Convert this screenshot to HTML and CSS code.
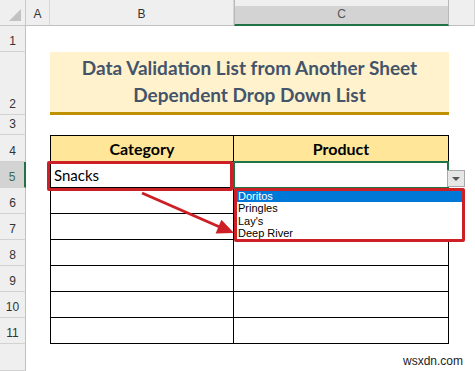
FILE: index.html
```html
<!DOCTYPE html>
<html lang="en">
<head>
  <meta charset="UTF-8">
  <meta name="viewport" content="width=device-width, initial-scale=1.0">
  <link rel="stylesheet" href="styles.css">
  <title>Dependent Drop Down List</title>
</head>
<body>
  <div class="sheet">
    <!-- column headers -->
    <div class="corner"><span class="corner-tri"></span></div>
    <div class="col-head">A</div>
    <div class="col-head">B</div>
    <div class="col-head selected">C</div>
    <div class="col-head"></div>

    <!-- row 1 -->
    <div class="row-head">1</div>
    <div></div><div></div><div></div><div></div>

    <!-- row 2: title -->
    <div class="row-head">2</div>
    <div></div>
    <div class="title">Data Validation List from Another Sheet<br>Dependent Drop Down List</div>
    <div></div>

    <!-- row 3 -->
    <div class="row-head">3</div>
    <div></div><div></div><div></div><div></div>

    <!-- row 4: table header -->
    <div class="row-head">4</div>
    <div></div>
    <div class="tc th first">Category</div>
    <div class="tc th">Product</div>
    <div></div>

    <!-- row 5 -->
    <div class="row-head selected">5</div>
    <div></div>
    <div class="tc first">Snacks</div>
    <div class="tc"></div>
    <div></div>

    <div class="row-head">6</div>
    <div></div><div class="tc first"></div><div class="tc"></div><div></div>

    <div class="row-head">7</div>
    <div></div><div class="tc first"></div><div class="tc"></div><div></div>

    <div class="row-head">8</div>
    <div></div><div class="tc first"></div><div class="tc"></div><div></div>

    <div class="row-head">9</div>
    <div></div><div class="tc first"></div><div class="tc"></div><div></div>

    <div class="row-head">10</div>
    <div></div><div class="tc first"></div><div class="tc"></div><div></div>

    <div class="row-head">11</div>
    <div></div><div class="tc first"></div><div class="tc"></div><div></div>

    <div class="row-head"></div>
    <div></div><div></div><div></div><div></div>

    <!-- overlays -->
    <div class="active-cell"></div>
    <div class="dd-btn"><span class="dd-tri"></span></div>
    <ul class="dd-list">
      <li class="picked">Doritos</li>
      <li>Pringles</li>
      <li>Lay's</li>
      <li>Deep River</li>
    </ul>
    <div class="mark mark-snacks"></div>
    <div class="mark mark-list"></div>
    <svg class="arrow" width="475" height="371" viewBox="0 0 475 371">
      <line x1="142" y1="193" x2="222" y2="228" stroke="#cc1f26" stroke-width="3"/>
      <polygon points="234,233 215.6,233.5 221.4,219.8" fill="#cc1f26"/>
    </svg>
    <div class="watermark">wsxdn.com</div>
  </div>
</body>
</html>
```

FILE: styles.css
```css
* {
  box-sizing: border-box;
}

body {
  margin: 0;
  background: #fff;
  font-family: 'Liberation Sans', Arial, sans-serif;
}

.sheet {
  position: relative;
  width: 475px;
  height: 371px;
  overflow: hidden;
  display: grid;
  grid-template-columns: 26px 24px 184px 215px 1fr;
  grid-template-rows: 26px 26px 63px 20px 27px repeat(7, 26px) 1fr;
}

.corner {
  background: #efefef;
  border-right: 1px solid #c8c8c8;
  border-bottom: 1px solid #c8c8c8;
  position: relative;
}

.corner-tri {
  position: absolute;
  right: 4px;
  bottom: 4px;
  width: 0;
  height: 0;
  border-left: 12px solid transparent;
  border-bottom: 12px solid #c2c2c2;
}

.col-head {
  background: #efefef;
  border-right: 1px solid #d6d6d6;
  border-bottom: 1px solid #c0c0c0;
  font-size: 12px;
  color: #333;
  display: flex;
  align-items: center;
  justify-content: center;
  padding-top: 3px;
}

.col-head.selected {
  background: linear-gradient(#efefef 6px, #d3d3d3 6px);
  border-left: 1px solid #b8b8b8;
  border-right: 1px solid #b8b8b8;
  border-bottom: 2px solid #217346;
  color: #555;
}

.row-head {
  background: #efefef;
  border-right: 1px solid #c0c0c0;
  border-bottom: 1px solid #d2d2d2;
  font-size: 12px;
  color: #333;
  display: flex;
  align-items: flex-end;
  justify-content: center;
  padding-bottom: 3px;
}

.row-head.selected {
  background: #d3d3d3;
  border-right: 2px solid #217346;
  color: #3b6b50;
}

.title {
  grid-column: 3 / 5;
  background: #fff2cc;
  border-bottom: 3px solid #bf9000;
  color: #44546a;
  font-family: Lato, 'Open Sans', sans-serif;
  font-weight: bold;
  font-size: 19px;
  line-height: 27px;
  text-align: center;
  padding-top: 2px;
}

.tc {
  border-right: 1px solid #000;
  border-bottom: 1px solid #000;
  font-family: Lato, 'Open Sans', sans-serif;
  font-size: 15px;
  color: #000;
  display: flex;
  align-items: flex-end;
  padding: 0 0 3px 3px;
}

.tc.first {
  border-left: 1px solid #000;
}

.tc.th {
  border-top: 1px solid #000;
  background: #ffe699;
  font-weight: bold;
  font-size: 16px;
  justify-content: center;
  padding-left: 0;
}

.active-cell {
  position: absolute;
  left: 233px;
  top: 161px;
  width: 216px;
  height: 28px;
  border: 2px solid #217346;
}

.dd-btn {
  position: absolute;
  left: 447px;
  top: 170px;
  width: 18px;
  height: 17px;
  background: #e6e6e6;
  border: 1px solid #a8a8a8;
  display: flex;
  align-items: center;
  justify-content: center;
}

.dd-tri {
  width: 0;
  height: 0;
  border-left: 4px solid transparent;
  border-right: 4px solid transparent;
  border-top: 4px solid #555;
}

.dd-list {
  position: absolute;
  left: 236px;
  top: 190px;
  width: 227px;
  height: 51px;
  margin: 0;
  padding: 1px 0 0 0;
  list-style: none;
  background: #fff;
  font-size: 11px;
  color: #000;
}

.dd-list li {
  height: 12.5px;
  line-height: 12.5px;
  padding-left: 2px;
}

.dd-list li.picked {
  background: #0078d7;
  color: #fff;
  height: 11px;
  line-height: 11px;
}

.mark {
  position: absolute;
  border: 3px solid #cc1f26;
  border-radius: 2px;
}

.mark-snacks {
  left: 47px;
  top: 161px;
  width: 186px;
  height: 30px;
}

.mark-list {
  left: 234px;
  top: 188px;
  width: 231px;
  height: 54px;
}

.arrow {
  position: absolute;
  left: 0;
  top: 0;
  pointer-events: none;
}

.watermark {
  position: absolute;
  left: 403px;
  top: 354px;
  font-size: 12px;
  color: #222;
}
```
